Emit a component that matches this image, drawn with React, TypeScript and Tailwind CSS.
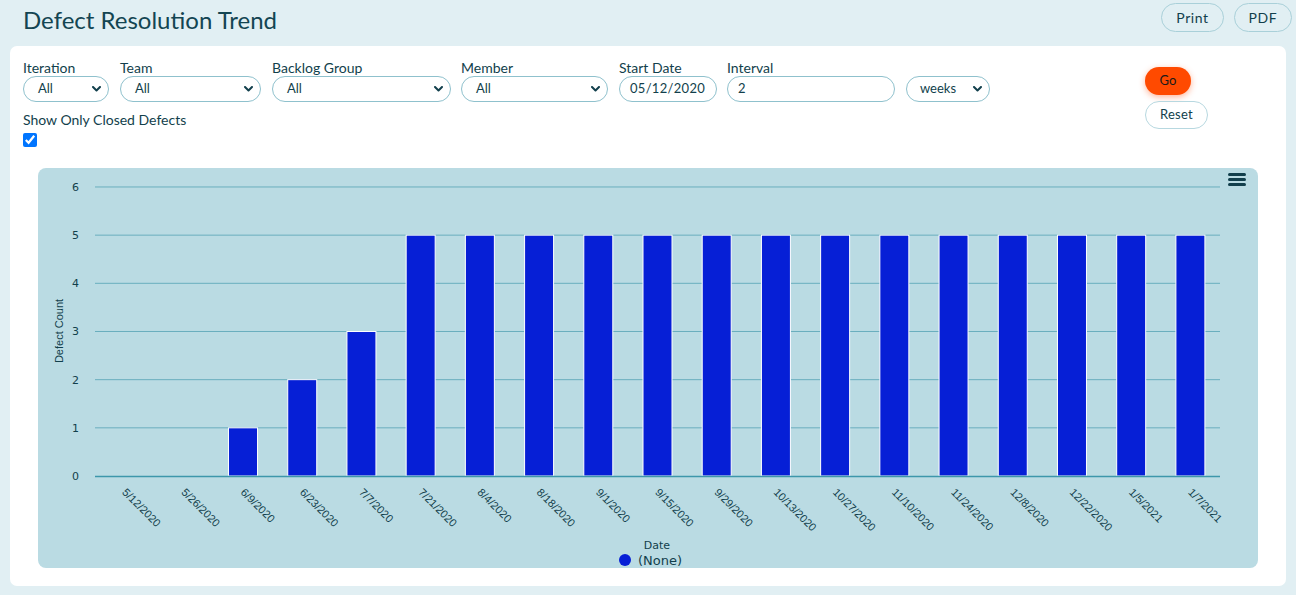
import React from 'react';

const dates = [
  '5/12/2020', '5/26/2020', '6/9/2020', '6/23/2020', '7/7/2020', '7/21/2020', '8/4/2020',
  '8/18/2020', '9/1/2020', '9/15/2020', '9/29/2020', '10/13/2020', '10/27/2020', '11/10/2020',
  '11/24/2020', '12/8/2020', '12/22/2020', '1/5/2021', '1/7/2021',
];
const values = [0, 0, 1, 2, 3, 5, 5, 5, 5, 5, 5, 5, 5, 5, 5, 5, 5, 5, 5];

const Chevron: React.FC = () => (
  <svg width="9" height="6" viewBox="0 0 9 6" className="shrink-0">
    <path d="M1 1l3.5 3.5L8 1" fill="none" stroke="#123f4c" strokeWidth="2" strokeLinecap="round" strokeLinejoin="round" />
  </svg>
);

const FakeSelect: React.FC<{ value: string; width: string; pad?: string }> = ({ value, width, pad = 'pl-[14px]' }) => (
  <div className={`${width} ${pad} h-[26px] pr-[7px] flex items-center justify-between rounded-full border border-[#8fc1cd] bg-white text-[13px] text-[#123f4c]`}>
    <span>{value}</span>
    <Chevron />
  </div>
);

const Field: React.FC<{ label: string; children: React.ReactNode }> = ({ label, children }) => (
  <div className="flex flex-col">
    <span className="text-[14px] leading-[17px] text-[#123f4c]">{label}</span>
    {children}
  </div>
);

const Chart: React.FC = () => {
  const left = 57;
  const width = 1125;
  const zeroY = 308;
  const step = 48.17;
  const cat = width / dates.length;
  return (
    <svg width="1220" height="400" viewBox="0 0 1220 400" className="block">
      {[1, 2, 3, 4, 5, 6].map((v) => (
        <line key={v} x1={left} x2={left + width} y1={zeroY - v * step} y2={zeroY - v * step} stroke="#6aaebe" strokeWidth="1" />
      ))}
      {[0, 1, 2, 3, 4, 5, 6].map((v) => (
        <text key={v} x="41" y={zeroY - v * step + 4} textAnchor="end" fontSize="11" fill="#123f4c" fontFamily="'DejaVu Sans', sans-serif">
          {v}
        </text>
      ))}
      {values.map((v, i) =>
        v > 0 ? (
          <rect
            key={i}
            x={left + cat * (i + 0.5) - 14.5}
            y={zeroY - v * step}
            width="29"
            height={v * step}
            fill="#061fd6"
            stroke="#ffffff"
            strokeWidth="1"
          />
        ) : null
      )}
      <line x1={left} x2={left + width} y1={zeroY + 0.5} y2={zeroY + 0.5} stroke="#3d97ab" strokeWidth="1.5" />
      {dates.map((d, i) => {
        const x = left + cat * (i + 0.5) - 3;
        const y = 325;
        return (
          <text key={d} x={x} y={y} transform={`rotate(45 ${x} ${y})`} fontSize="11" fill="#123f4c" fontFamily="'Liberation Sans', Arial, sans-serif">
            {d}
          </text>
        );
      })}
      <text x="25" y="163" transform="rotate(-90 25 163)" textAnchor="middle" fontSize="11" fill="#123f4c" fontFamily="'Liberation Sans', Arial, sans-serif">
        Defect Count
      </text>
      <text x="619" y="381" textAnchor="middle" fontSize="11" fill="#123f4c" fontFamily="'DejaVu Sans', sans-serif">
        Date
      </text>
      <circle cx="587" cy="392" r="6" fill="#061fd6" />
      <text x="600" y="396.5" fontSize="13" fill="#123f4c" fontFamily="'DejaVu Sans', sans-serif">
        (None)
      </text>
      <g fill="#123f4c">
        <rect x="1190" y="5" width="18" height="3" rx="1.5" />
        <rect x="1190" y="10" width="18" height="3" rx="1.5" />
        <rect x="1190" y="15" width="18" height="3" rx="1.5" />
      </g>
    </svg>
  );
};

export default function App() {
  return (
    <div className="w-[1296px] h-[595px] bg-[#e1eff3] font-['Lato','Noto_Sans',sans-serif] text-[#123f4c] overflow-hidden">
      <div className="h-[46px] flex items-start justify-between pl-[23px] pr-[4px]">
        <h1 className="mt-[5px] text-[24px] leading-[30px] text-[#134552]">Defect Resolution Trend</h1>
        <div className="flex gap-[10px] mt-[3px]">
          <button className="w-[63px] h-[29px] rounded-full border border-[#a9d0d9] text-[14px] tracking-[0.6px] text-[#123f4c]">Print</button>
          <button className="w-[58px] h-[29px] rounded-full border border-[#a9d0d9] text-[14px] tracking-[0.6px] text-[#123f4c]">PDF</button>
        </div>
      </div>
      <div className="mx-[10px] h-[540px] bg-white rounded-[7px] pt-[13px] px-[13px]">
        <div className="flex h-[109px]">
          <div className="flex flex-col">
            <div className="flex">
              <Field label="Iteration"><FakeSelect value="All" width="w-[86px]" /></Field>
              <div className="ml-[11px]"><Field label="Team"><FakeSelect value="All" width="w-[141px]" /></Field></div>
              <div className="ml-[11px]"><Field label="Backlog Group"><FakeSelect value="All" width="w-[179px]" /></Field></div>
              <div className="ml-[10px]"><Field label="Member"><FakeSelect value="All" width="w-[147px]" /></Field></div>
              <div className="ml-[11px]">
                <Field label="Start Date">
                  <div className="w-[98px] h-[26px] pl-[10px] flex items-center rounded-full border border-[#8fc1cd] text-[13px] tracking-[0.3px]">05/12/2020</div>
                </Field>
              </div>
              <div className="ml-[10px]">
                <Field label="Interval">
                  <div className="w-[168px] h-[26px] pl-[10px] flex items-center rounded-full border border-[#8fc1cd] text-[13px]">2</div>
                </Field>
              </div>
              <div className="ml-[11px] flex flex-col pt-[17px]">
                <FakeSelect value="weeks" width="w-[84px]" pad="pl-[13px]" />
              </div>
            </div>
            <span className="mt-[9px] text-[14px] leading-[17px]">Show Only Closed Defects</span>
            <input type="checkbox" defaultChecked className="mt-[5px] w-[14px] h-[14px] m-0 accent-[#0075ff]" />
          </div>
          <div className="ml-[155px] mt-[8px] flex flex-col gap-[6px]">
            <button className="w-[46px] h-[28px] rounded-full bg-[#ff4a00] text-[13px] text-[#1a1a1a] shadow-[0_2px_6px_rgba(255,90,30,0.45)]">Go</button>
            <button className="w-[63px] h-[28px] rounded-full border border-[#b7d8e0] text-[13px] tracking-[0.3px]">Reset</button>
          </div>
        </div>
        <div className="mx-[15px] h-[400px] bg-[#badbe3] rounded-[8px]">
          <Chart />
        </div>
      </div>
    </div>
  );
}
